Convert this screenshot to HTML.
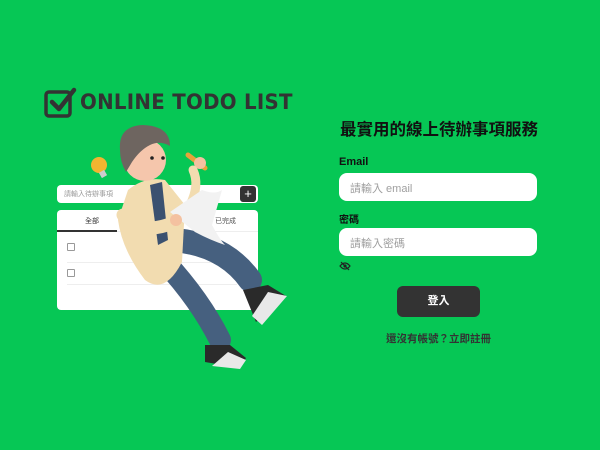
<!DOCTYPE html>
<html><head><meta charset="utf-8"><style>
*{margin:0;padding:0;box-sizing:border-box}
body{width:600px;height:450px;background:#06C755;font-family:"Liberation Sans","Noto Sans CJK TC",sans-serif;position:relative;overflow:hidden;color:#333}
.a{position:absolute}
.logo{left:80px;top:90px;font-size:21.5px;font-weight:900;color:#333;letter-spacing:0.3px;font-family:"DejaVu Sans",sans-serif;transform:scaleX(0.92);transform-origin:left}
.inp{background:#fff;border-radius:8px}
.ph{color:#9f9f9f;font-size:11px}
</style></head><body>
<svg class="a" style="left:43px;top:86px" width="36" height="34" viewBox="0 0 36 34"><rect x="3" y="6" width="24" height="24" rx="3" fill="none" stroke="#333" stroke-width="3.5"/><path d="M9 16 L16 23 L31 4" fill="none" stroke="#333" stroke-width="4.5" stroke-linecap="round" stroke-linejoin="round"/></svg>
<div class="a logo">ONLINE TODO LIST</div>

<div class="a inp" style="left:57px;top:185px;width:201px;height:18px;border-radius:4px"></div>
<div class="a" style="left:64px;top:189px;font-size:7px;color:#999">請輸入待辦事項</div>
<div class="a" style="left:240px;top:186px;width:16px;height:16px;background:#333;border-radius:3px;color:#fff;font-size:13px;line-height:15px;text-align:center">+</div>
<div class="a inp" style="left:57px;top:210px;width:201px;height:100px;border-radius:4px"></div>
<div class="a" style="left:85px;top:216px;font-size:7px;color:#333">全部</div>
<div class="a" style="left:215px;top:216px;font-size:7px;color:#555">已完成</div>
<div class="a" style="left:57px;top:230px;width:60px;height:2px;background:#333"></div>
<div class="a" style="left:117px;top:231px;width:141px;height:1px;background:#eee"></div>
<div class="a" style="left:67px;top:243px;width:8px;height:8px;border:1px solid #999;border-radius:1px"></div>
<div class="a" style="left:67px;top:269px;width:8px;height:8px;border:1px solid #999;border-radius:1px"></div>
<div class="a" style="left:67px;top:262px;width:170px;height:1px;background:#eee"></div>
<div class="a" style="left:67px;top:284px;width:170px;height:1px;background:#eee"></div>

<svg class="a" style="left:85px;top:120px" width="210" height="255" viewBox="85 120 210 255">
<circle cx="99" cy="165" r="8" fill="#f2b530"/><rect x="100" y="171" width="6" height="6" fill="#ccc" transform="rotate(-30 103 174)"/>
<path d="M188 155 L205 168" stroke="#e8a23a" stroke-width="5" stroke-linecap="round"/>
<circle cx="200" cy="163" r="6" fill="#f4c1a0"/>
<path d="M193 170 Q200 185 190 205" stroke="#f2dcb0" stroke-width="9" fill="none" stroke-linecap="round"/>
<path d="M175 240 Q225 245 250 280" stroke="#46607f" stroke-width="24" fill="none" stroke-linecap="round"/>
<path d="M165 262 Q200 300 220 340" stroke="#46607f" stroke-width="22" fill="none" stroke-linecap="round"/>
<path d="M243 290 L268 285 L286 296 L256 322 Z" fill="#2a2a2a"/><path d="M268 292 L287 296 L262 325 L252 316Z" fill="#e8e8e8"/>
<path d="M205 345 L230 345 L246 358 L240 368 L205 362 Z" fill="#2a2a2a"/><path d="M228 352 L246 360 L240 369 L212 366Z" fill="#e8e8e8"/>
<path d="M128 190 Q145 176 165 180 L185 205 L182 262 Q165 295 145 280 Q122 250 118 220 Z" fill="#f2dcb0"/>
<path d="M150 185 L162 182 L168 240 L158 245 Z" fill="#3b5170"/>
<path d="M170 212 L202 190 Q215 195 222 190 L212 225 Q220 240 225 245 Q210 240 195 232 Z" fill="#f2f2f2"/>
<path d="M123 215 Q140 237 175 222" stroke="#f2dcb0" stroke-width="13" fill="none" stroke-linecap="round"/>
<circle cx="176" cy="220" r="6" fill="#f4c1a0"/>
<circle cx="145" cy="160" r="21" fill="#f5c6ac"/>
<path d="M120 150 Q118 126 143 125 Q170 126 170 146 Q160 140 150 145 Q140 150 132 162 L126 172 Q120 162 120 150Z" fill="#6e6560"/>
<circle cx="152" cy="158" r="1.8" fill="#222"/><circle cx="163" cy="158" r="1.8" fill="#222"/>
</svg>

<div class="a" style="left:340px;top:116px;font-size:16.5px;font-weight:bold;color:#111">最實用的線上待辦事項服務</div>
<div class="a" style="left:339px;top:156px;font-size:11px;font-weight:bold;color:#111">Email</div>
<div class="a inp" style="left:339px;top:173px;width:198px;height:28px"></div>
<div class="a ph" style="left:350px;top:180px">請輸入 email</div>
<div class="a" style="left:339px;top:211px;font-size:10px;font-weight:bold;color:#111">密碼</div>
<div class="a inp" style="left:339px;top:228px;width:198px;height:28px"></div>
<div class="a ph" style="left:350px;top:235px">請輸入密碼</div>
<svg class="a" style="left:339px;top:261px" width="12" height="10" viewBox="0 0 12 10"><path d="M1 5 Q6 -1 11 5 Q6 11 1 5Z" fill="none" stroke="#222" stroke-width="1.2"/><circle cx="6" cy="5" r="1.6" fill="#222"/><path d="M2 1 L10 9" stroke="#222" stroke-width="1.2"/></svg>
<div class="a" style="left:397px;top:286px;width:83px;height:31px;background:#333;border-radius:6px;color:#fff;font-size:11px;font-weight:bold;text-align:center;line-height:31px">登入</div>
<div class="a" style="left:386px;top:331px;font-size:10.5px;font-weight:bold;color:#333">還沒有帳號？立即註冊</div>
</body></html>
